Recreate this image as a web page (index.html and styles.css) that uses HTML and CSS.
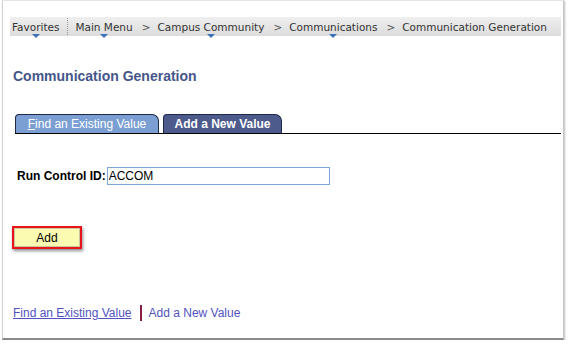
FILE: index.html
```html
<!DOCTYPE html>
<html lang="en">
<head>
    <meta charset="UTF-8">
    <meta name="viewport" content="width=device-width, initial-scale=1.0">
    <title>Communication Generation</title>
    <link rel="stylesheet" href="styles.css">
</head>

<body>
    <div class="frame">
        <div class="crumbs">
            <span class="crumb drop">Favorites</span>
            <span class="dots"></span>
            <span class="crumb drop">Main Menu</span>
            <span class="sep">&gt;</span>
            <span class="crumb drop">Campus Community</span>
            <span class="sep">&gt;</span>
            <span class="crumb drop">Communications</span>
            <span class="sep">&gt;</span>
            <span class="crumb">Communication Generation</span>
        </div>

        <h1 class="title">Communication Generation</h1>

        <div class="tabs">
            <span class="tab"><u>F</u>ind an Existing Value</span>
            <span class="tab active">Add a New Value</span>
        </div>

        <div class="row">
            <label class="lbl" for="runid">Run Control ID:</label>
            <input class="field" type="text" id="runid" value="ACCOM">
        </div>

        <div class="mark">
            <button class="btn">Add</button>
        </div>

        <div class="links">
            <a href="#" class="lnk">Find an Existing Value</a>
            <span class="pipe"></span>
            <span class="lnk plain">Add a New Value</span>
        </div>
    </div>
</body>

</html>
```

FILE: styles.css
```css
body {
    margin: 0;
    background-color: #fff;
    overflow: hidden;
}

.frame {
    margin-left: 2px;
    width: 562px;
    height: 340px;
    border-left: 1px solid #d0d0d0;
    border-top: 1px solid #e6e6e6;
    border-right: 1px solid #c4c4c4;
    border-bottom: 2px solid #8a8a8a;
    box-shadow: 1px 1px 2px rgba(0, 0, 0, 0.25);
    box-sizing: border-box;
    font-family: "Liberation Sans", Arial, sans-serif;
    font-size: 12px;
    color: #000;
}

/* breadcrumb bar */
.crumbs {
    display: flex;
    align-items: center;
    margin: 16px 2px 0 7px;
    height: 19px;
    padding-left: 2px;
    background: linear-gradient(#efefef, #dcdcdc);
    font-family: "DejaVu Sans", Verdana, sans-serif;
    font-size: 10.5px;
    color: #333;
}

.crumb {
    position: relative;
    white-space: nowrap;
}

.drop::after {
    content: "";
    position: absolute;
    left: 50%;
    bottom: -5px;
    margin-left: -4px;
    border-left: 4px solid transparent;
    border-right: 4px solid transparent;
    border-top: 4px solid #3f72b8;
}

.dots {
    height: 17px;
    margin: 0 7px 0 8px;
    border-left: 1px dotted #999;
}

.sep {
    margin: 0 7px 0 9px;
    color: #555;
}

.title {
    margin: 32px 0 0 10px;
    font-size: 14px;
    font-weight: bold;
    color: #45568a;
}

/* tabs */
.tabs {
    display: flex;
    gap: 4px;
    margin: 30px 2px 0 12px;
    border-bottom: 1px solid #000;
}

.tab {
    height: 18px;
    line-height: 19px;
    border: 1px solid #1f2a4a;
    border-bottom: none;
    border-radius: 4px 7px 0 0;
    background-color: #7b9fd2;
    color: #fff;
    font-size: 12px;
    width: 142px;
    text-align: center;
}

.tab.active {
    width: 117px;
    background-color: #4c5a8c;
    font-weight: bold;
}

/* form row */
.row {
    display: flex;
    align-items: center;
    margin: 33px 0 0 14px;
}

.lbl {
    font-weight: bold;
    margin-right: 1px;
}

.field {
    width: 223px;
    height: 18px;
    padding: 0 0 0 1px;
    border: 1px solid #7fa4d8;
    box-sizing: border-box;
    font-family: "Liberation Sans", Arial, sans-serif;
    font-size: 12px;
    color: #000;
}

/* highlighted button */
.mark {
    margin: 41px 0 0 9px;
    width: 70px;
    height: 23px;
    border: 2px solid #e8141a;
    box-sizing: border-box;
    box-shadow: 1px 2px 3px rgba(0, 0, 0, 0.45);
}

.btn {
    display: block;
    width: 100%;
    height: 100%;
    margin: 0;
    border: 1px solid #c8c8a0;
    background-color: #fbfbb2;
    font-family: "Liberation Sans", Arial, sans-serif;
    font-size: 12px;
    color: #000;
    padding: 0;
}

/* bottom links */
.links {
    display: flex;
    align-items: center;
    margin: 56px 0 0 10px;
}

.lnk {
    color: #5252c0;
    font-size: 12px;
}

.plain {
    text-decoration: none;
}

.pipe {
    height: 16px;
    margin: 0 7px 0 8px;
    border-left: 2px solid #8a1d3e;
}
```
